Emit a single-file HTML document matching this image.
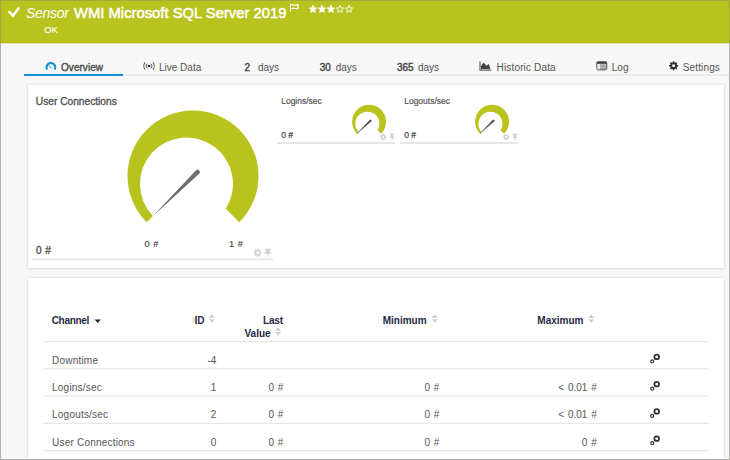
<!DOCTYPE html>
<html><head><meta charset="utf-8"><style>
html,body{margin:0;padding:0;}
body{width:730px;height:460px;overflow:hidden;position:relative;background:#f7f7f7;font-family:"Liberation Sans",sans-serif;}
.t{position:absolute;white-space:nowrap;}
.h{word-spacing:1px;}
.panel{position:absolute;background:#fff;box-shadow:0 0 2px rgba(0,0,0,0.14),0 1px 3px rgba(0,0,0,0.08);}
</style></head><body>
<div style="position:absolute;left:0;top:0;width:730px;height:43px;background:#b8c31d;"></div><div style="position:absolute;left:0;top:42px;width:730px;height:1px;background:#b2be12;"></div><div style="position:absolute;left:0;top:43px;width:730px;height:1px;background:#e2e6b4;"></div><div style="position:absolute;left:0;top:44px;width:730px;height:1px;background:#fdfdfd;"></div><svg style="position:absolute;left:0;top:0" width="40" height="40"><path d="M8.6,11.3 L13.1,15.6 L19.2,7.6" fill="none" stroke="#fff" stroke-width="2.4"/></svg><div class="t" style="left:26.00px;top:6.45px;font-size:14px;line-height:14px;color:#fff;font-weight:normal;font-style:italic;letter-spacing:-0.3px;">Sensor</div>
<div class="t" style="left:74.00px;top:5.77px;font-size:14.8px;line-height:14.8px;color:#fff;font-weight:normal;font-style:normal;-webkit-text-stroke:0.5px #fff;">WMI Microsoft SQL Server 2019</div>
<svg style="position:absolute;left:288px;top:3px" width="12" height="10"><path d="M2.5,1 V9 M2.5,1.8 C4.5,0.8 6,3 8,2 C9,1.6 9.5,1.6 10,1.6 L10,5.6 C8,6.4 6.5,4.4 4.5,5.4 L2.5,5.8" fill="none" stroke="#fff" stroke-width="1.1"/></svg><svg style="position:absolute;left:309.4px;top:4.5px" width="9" height="9"><path d="M4,0.3 L5,2.9 L7.7,3 L5.6,4.7 L6.3,7.4 L4,5.9 L1.7,7.4 L2.4,4.7 L0.3,3 L3,2.9 Z" fill="#fff" stroke="#fff" stroke-width="0.9" stroke-linejoin="round"/></svg><svg style="position:absolute;left:318.4px;top:4.5px" width="9" height="9"><path d="M4,0.3 L5,2.9 L7.7,3 L5.6,4.7 L6.3,7.4 L4,5.9 L1.7,7.4 L2.4,4.7 L0.3,3 L3,2.9 Z" fill="#fff" stroke="#fff" stroke-width="0.9" stroke-linejoin="round"/></svg><svg style="position:absolute;left:327.4px;top:4.5px" width="9" height="9"><path d="M4,0.3 L5,2.9 L7.7,3 L5.6,4.7 L6.3,7.4 L4,5.9 L1.7,7.4 L2.4,4.7 L0.3,3 L3,2.9 Z" fill="#fff" stroke="#fff" stroke-width="0.9" stroke-linejoin="round"/></svg><svg style="position:absolute;left:336.4px;top:4.5px" width="9" height="9"><path d="M4,0.3 L5,2.9 L7.7,3 L5.6,4.7 L6.3,7.4 L4,5.9 L1.7,7.4 L2.4,4.7 L0.3,3 L3,2.9 Z" fill="none" stroke="#fff" stroke-width="0.9" stroke-linejoin="round"/></svg><svg style="position:absolute;left:345.4px;top:4.5px" width="9" height="9"><path d="M4,0.3 L5,2.9 L7.7,3 L5.6,4.7 L6.3,7.4 L4,5.9 L1.7,7.4 L2.4,4.7 L0.3,3 L3,2.9 Z" fill="none" stroke="#fff" stroke-width="0.9" stroke-linejoin="round"/></svg><div class="t" style="left:44.30px;top:25.44px;font-size:9.4px;line-height:9.4px;color:#fff;font-weight:normal;font-style:normal;-webkit-text-stroke:0.15px #fff;">OK</div>
<div style="position:absolute;left:24px;top:74px;width:705px;height:2px;background:#ececec;"></div><div style="position:absolute;left:24px;top:73.5px;width:99px;height:2px;background:#0d90d5;"></div><svg style="position:absolute;left:40px;top:56px" width="20" height="20"><path d="M7.2,13.6 A4.3,4.3 0 1,1 14.6,13.6" fill="none" stroke="#0d90d5" stroke-width="2"/><path d="M8.8,9.6 L12.2,12.4" stroke="#0d90d5" stroke-width="1.1" stroke-dasharray="1.2,0.6"/></svg><div class="t" style="left:61.00px;top:63.03px;font-size:10px;line-height:10px;color:#4a4a4a;font-weight:normal;font-style:normal;-webkit-text-stroke:0.35px #4a4a4a;letter-spacing:0.05px;">Overview</div>
<svg style="position:absolute;left:140px;top:56px" width="20" height="20"><circle cx="9" cy="10" r="1.35" fill="#333"/><path d="M7.1,7.7 A3.2,3.2 0 0,0 7.1,12.3 M10.9,7.7 A3.2,3.2 0 0,1 10.9,12.3" fill="none" stroke="#555" stroke-width="1"/><path d="M5.2,6.4 A5.4,5.4 0 0,0 5.2,13.6 M12.8,6.4 A5.4,5.4 0 0,1 12.8,13.6" fill="none" stroke="#555" stroke-width="1.05"/></svg><div class="t" style="left:159.00px;top:63.03px;font-size:10px;line-height:10px;color:#555;font-weight:normal;font-style:normal;">Live Data</div>
<div class="t" style="left:244.60px;top:63.03px;font-size:10px;line-height:10px;color:#444;font-weight:normal;font-style:normal;-webkit-text-stroke:0.4px #444;">2</div>
<div class="t" style="left:257.90px;top:63.03px;font-size:10px;line-height:10px;color:#555;font-weight:normal;font-style:normal;">days</div>
<div class="t" style="left:319.80px;top:63.03px;font-size:10px;line-height:10px;color:#444;font-weight:normal;font-style:normal;-webkit-text-stroke:0.4px #444;">30</div>
<div class="t" style="left:335.70px;top:63.03px;font-size:10px;line-height:10px;color:#555;font-weight:normal;font-style:normal;">days</div>
<div class="t" style="left:396.90px;top:63.03px;font-size:10px;line-height:10px;color:#444;font-weight:normal;font-style:normal;-webkit-text-stroke:0.4px #444;">365</div>
<div class="t" style="left:417.90px;top:63.03px;font-size:10px;line-height:10px;color:#555;font-weight:normal;font-style:normal;">days</div>
<svg style="position:absolute;left:476px;top:58px" width="20" height="16"><path d="M4,3.3 V12.1 H15.3" fill="none" stroke="#666" stroke-width="1.2"/><path d="M5,11 L5,8 L7.6,4.6 L10.4,7.8 L13,6.1 L14.3,11 Z" fill="#444"/></svg><div class="t" style="left:496.60px;top:63.03px;font-size:10px;line-height:10px;color:#555;font-weight:normal;font-style:normal;letter-spacing:0.15px;">Historic Data</div>
<svg style="position:absolute;left:594px;top:59px" width="16" height="13"><rect x="2.8" y="3" width="10" height="7.9" rx="1.3" fill="#c4c4c4" stroke="#4a4a4a" stroke-width="0.9"/><rect x="2.6" y="2.6" width="10.4" height="2.1" rx="0.8" fill="#3c3c3c"/><rect x="3.6" y="5" width="2.3" height="5.2" fill="#eee"/><path d="M6.4,6.2 H12.2 M6.4,7.9 H12.2 M6.4,9.5 H12.2" stroke="#8a8a8a" stroke-width="0.7"/></svg><div class="t" style="left:611.80px;top:63.03px;font-size:10px;line-height:10px;color:#555;font-weight:normal;font-style:normal;">Log</div>
<svg style="position:absolute;left:664px;top:56px" width="20" height="20"><path d="M13.00,8.96 L14.13,9.02 L14.13,10.58 L13.00,10.64 L12.60,11.61 L13.36,12.45 L12.25,13.56 L11.41,12.80 L10.44,13.20 L10.38,14.33 L8.82,14.33 L8.76,13.20 L7.79,12.80 L6.95,13.56 L5.84,12.45 L6.60,11.61 L6.20,10.64 L5.07,10.58 L5.07,9.02 L6.20,8.96 L6.60,7.99 L5.84,7.15 L6.95,6.04 L7.79,6.80 L8.76,6.40 L8.82,5.27 L10.38,5.27 L10.44,6.40 L11.41,6.80 L12.25,6.04 L13.36,7.15 L12.60,7.99 Z M11.05,9.80 A1.45,1.45 0 1,0 8.15,9.80 A1.45,1.45 0 1,0 11.05,9.80 Z" fill="#333" fill-rule="evenodd"/></svg><div class="t" style="left:682.70px;top:63.03px;font-size:10px;line-height:10px;color:#555;font-weight:normal;font-style:normal;letter-spacing:0.15px;">Settings</div>
<div class="panel" style="left:28px;top:85px;width:696px;height:183px;"></div><div class="panel" style="left:28px;top:278px;width:696px;height:200px;"></div><div class="t" style="left:35.80px;top:97.47px;font-size:10.2px;line-height:10.2px;color:#555;font-weight:normal;font-style:normal;-webkit-text-stroke:0.35px #555;">User Connections</div>
<svg style="position:absolute;left:0;top:0" width="730" height="460"><path d="M146.70,222.30 A65.50,65.50 0 1,1 239.30,222.30 L225.80,208.80 A46.50,46.50 0 1,0 152.90,216.10 Z" fill="#b8c31d"/><path d="M152.70,216.30 L195.90,170.40 A2.30,2.30 0 0,1 199.20,173.70 Z" fill="#6e6e6e"/><path d="M357.08,133.72 A17.00,17.00 0 1,1 381.12,133.72 L377.61,130.21 A12.07,12.07 0 1,0 358.69,132.11 Z" fill="#b8c31d"/><path d="M357.0,133.6 L369.9,119.9 A0.95,0.95 0 0,1 371.2,121.2 Z" fill="#444" stroke="#444" stroke-width="0.3"/><path d="M480.08,133.72 A17.00,17.00 0 1,1 504.12,133.72 L500.61,130.21 A12.07,12.07 0 1,0 481.69,132.11 Z" fill="#b8c31d"/><path d="M480.0,133.6 L492.9,119.9 A0.95,0.95 0 0,1 494.2,121.2 Z" fill="#444" stroke="#444" stroke-width="0.3"/><circle cx="656.7" cy="356.90" r="2.3" fill="none" stroke="#333" stroke-width="1.75"/><circle cx="652.2" cy="361.40" r="1.5" fill="none" stroke="#3a3a3a" stroke-width="1.25"/><circle cx="656.7" cy="384.15" r="2.3" fill="none" stroke="#333" stroke-width="1.75"/><circle cx="652.2" cy="388.65" r="1.5" fill="none" stroke="#3a3a3a" stroke-width="1.25"/><circle cx="656.7" cy="411.40" r="2.3" fill="none" stroke="#333" stroke-width="1.75"/><circle cx="652.2" cy="415.90" r="1.5" fill="none" stroke="#3a3a3a" stroke-width="1.25"/><circle cx="656.7" cy="438.65" r="2.3" fill="none" stroke="#333" stroke-width="1.75"/><circle cx="652.2" cy="443.15" r="1.5" fill="none" stroke="#3a3a3a" stroke-width="1.25"/><path d="M260.51,251.88 L261.64,251.90 L261.64,253.30 L260.51,253.32 L260.17,254.15 L260.95,254.97 L259.97,255.95 L259.15,255.17 L258.32,255.51 L258.30,256.64 L256.90,256.64 L256.88,255.51 L256.05,255.17 L255.23,255.95 L254.25,254.97 L255.03,254.15 L254.69,253.32 L253.56,253.30 L253.56,251.90 L254.69,251.88 L255.03,251.05 L254.25,250.23 L255.23,249.25 L256.05,250.03 L256.88,249.69 L256.90,248.56 L258.30,248.56 L258.32,249.69 L259.15,250.03 L259.97,249.25 L260.95,250.23 L260.17,251.05 Z M258.90,252.60 A1.3,1.3 0 1,0 256.30,252.60 A1.3,1.3 0 1,0 258.90,252.60 Z" fill="#cfd3d6" fill-rule="evenodd"/><path d="M264.5,249.2 H271 M266.3,249.2 V252 L265,253.5 H270.5 L269.2,252 V249.2 M267.75,253.5 V256.5" fill="#cfd3d6" stroke="#cfd3d6" stroke-width="1.1"/><path d="M385.53,136.52 L386.35,136.56 L386.35,137.64 L385.53,137.68 L385.26,138.34 L385.81,138.95 L385.05,139.71 L384.44,139.16 L383.78,139.43 L383.74,140.25 L382.66,140.25 L382.62,139.43 L381.96,139.16 L381.35,139.71 L380.59,138.95 L381.14,138.34 L380.87,137.68 L380.05,137.64 L380.05,136.56 L380.87,136.52 L381.14,135.86 L380.59,135.25 L381.35,134.49 L381.96,135.04 L382.62,134.77 L382.66,133.95 L383.74,133.95 L383.78,134.77 L384.44,135.04 L385.05,134.49 L385.81,135.25 L385.26,135.86 Z M384.20,137.10 A1.0,1.0 0 1,0 382.20,137.10 A1.0,1.0 0 1,0 384.20,137.10 Z" fill="#cfd3d6" fill-rule="evenodd"/><path d="M389.5,134 H394.5 M391,134 V136.3 L390,137.6 H394 L393,136.3 V134 M392,137.6 V140.5" fill="#cfd3d6" stroke="#cfd3d6" stroke-width="1"/><path d="M508.53,136.52 L509.35,136.56 L509.35,137.64 L508.53,137.68 L508.26,138.34 L508.81,138.95 L508.05,139.71 L507.44,139.16 L506.78,139.43 L506.74,140.25 L505.66,140.25 L505.62,139.43 L504.96,139.16 L504.35,139.71 L503.59,138.95 L504.14,138.34 L503.87,137.68 L503.05,137.64 L503.05,136.56 L503.87,136.52 L504.14,135.86 L503.59,135.25 L504.35,134.49 L504.96,135.04 L505.62,134.77 L505.66,133.95 L506.74,133.95 L506.78,134.77 L507.44,135.04 L508.05,134.49 L508.81,135.25 L508.26,135.86 Z M507.20,137.10 A1.0,1.0 0 1,0 505.20,137.10 A1.0,1.0 0 1,0 507.20,137.10 Z" fill="#cfd3d6" fill-rule="evenodd"/><path d="M512.5,134 H517.5 M514,134 V136.3 L513,137.6 H517 L516,136.3 V134 M515,137.6 V140.5" fill="#cfd3d6" stroke="#cfd3d6" stroke-width="1"/><path d="M208.8,318.1 L211.8,314.3 L214.8,318.1 Z M208.8,319.2 L211.8,323.0 L214.8,319.2 Z" fill="#cbcfd2"/><path d="M275.0,330.8 L278.0,327.0 L281.0,330.8 Z M275.0,331.9 L278.0,335.7 L281.0,331.9 Z" fill="#cbcfd2"/><path d="M431.8,318.1 L434.8,314.3 L437.8,318.1 Z M431.8,319.2 L434.8,323.0 L437.8,319.2 Z" fill="#cbcfd2"/><path d="M588.3,318.1 L591.3,314.3 L594.3,318.1 Z M588.3,319.2 L591.3,323.0 L594.3,319.2 Z" fill="#cbcfd2"/><path d="M94.6,319.4 H100.8 L97.7,323 Z" fill="#1d2640"/></svg><div class="t h" style="left:36.00px;top:246.44px;font-size:10px;line-height:10px;color:#4a4a4a;font-weight:normal;font-style:normal;-webkit-text-stroke:0.3px #4a4a4a;">0 #</div>
<svg style="position:absolute;left:0;top:250px" width="300" height="20"><rect x="32" y="8.6" width="241" height="1.5" fill="#e3e3e3"/></svg><div class="t h" style="left:144.50px;top:239.63px;font-size:9.3px;line-height:9.3px;color:#4a4a4a;font-weight:normal;font-style:normal;-webkit-text-stroke:0.2px #4a4a4a;">0 #</div>
<div class="t h" style="left:228.90px;top:239.63px;font-size:9.3px;line-height:9.3px;color:#4a4a4a;font-weight:normal;font-style:normal;-webkit-text-stroke:0.2px #4a4a4a;">1 #</div>
<div class="t" style="left:281.20px;top:96.70px;font-size:8.5px;line-height:8.5px;color:#555;font-weight:normal;font-style:normal;-webkit-text-stroke:0.2px #555;">Logins/sec</div>
<div class="t h" style="left:281.20px;top:131.30px;font-size:8.5px;line-height:8.5px;color:#4a4a4a;font-weight:normal;font-style:normal;word-spacing:0;-webkit-text-stroke:0.25px #4a4a4a;">0 #</div>
<div style="position:absolute;left:277px;top:142px;width:118px;height:2px;background:#e6e6e6;"></div><div class="t" style="left:404.20px;top:96.70px;font-size:8.5px;line-height:8.5px;color:#555;font-weight:normal;font-style:normal;-webkit-text-stroke:0.2px #555;">Logouts/sec</div>
<div class="t h" style="left:404.20px;top:131.30px;font-size:8.5px;line-height:8.5px;color:#4a4a4a;font-weight:normal;font-style:normal;word-spacing:0;-webkit-text-stroke:0.25px #4a4a4a;">0 #</div>
<div style="position:absolute;left:400px;top:142px;width:118px;height:2px;background:#e6e6e6;"></div><div class="t" style="left:51.70px;top:315.84px;font-size:10px;line-height:10px;color:#1f2a44;font-weight:bold;font-style:normal;letter-spacing:-0.3px;">Channel</div>
<div class="t" style="left:194.40px;top:316.24px;font-size:10px;line-height:10px;color:#1f2a44;font-weight:bold;font-style:normal;">ID</div>
<div class="t" style="left:263.10px;top:316.24px;font-size:10px;line-height:10px;color:#1f2a44;font-weight:bold;font-style:normal;letter-spacing:-0.2px;">Last</div>
<div class="t" style="left:244.50px;top:328.64px;font-size:10px;line-height:10px;color:#1f2a44;font-weight:bold;font-style:normal;">Value</div>
<div class="t" style="left:382.70px;top:316.24px;font-size:10px;line-height:10px;color:#1f2a44;font-weight:bold;font-style:normal;">Minimum</div>
<div class="t" style="left:537.30px;top:316.24px;font-size:10px;line-height:10px;color:#1f2a44;font-weight:bold;font-style:normal;">Maximum</div>
<svg style="position:absolute;left:0;top:0" width="730" height="460"><rect x="43.5" y="341.00" width="665" height="1.2" fill="#e6e6e6"/><rect x="43.5" y="368.25" width="665" height="1.2" fill="#e6e6e6"/><rect x="43.5" y="395.50" width="665" height="1.2" fill="#e6e6e6"/><rect x="43.5" y="422.75" width="665" height="1.2" fill="#e6e6e6"/><rect x="43.5" y="450.00" width="665" height="1.2" fill="#e6e6e6"/></svg><div class="t" style="left:52.10px;top:355.94px;font-size:10px;line-height:10px;color:#555;font-weight:normal;font-style:normal;letter-spacing:0.2px;">Downtime</div>
<div class="t" style="right:513.70px;top:355.94px;font-size:10px;line-height:10px;color:#555;font-weight:normal;font-style:normal;">-4</div>
<div class="t" style="left:52.10px;top:383.19px;font-size:10px;line-height:10px;color:#555;font-weight:normal;font-style:normal;letter-spacing:0.2px;">Logins/sec</div>
<div class="t" style="right:513.70px;top:383.19px;font-size:10px;line-height:10px;color:#555;font-weight:normal;font-style:normal;">1</div>
<div class="t h" style="right:446.60px;top:383.19px;font-size:10px;line-height:10px;color:#555;font-weight:normal;font-style:normal;">0 #</div>
<div class="t h" style="right:290.60px;top:383.19px;font-size:10px;line-height:10px;color:#555;font-weight:normal;font-style:normal;">0 #</div>
<div class="t h" style="right:133.30px;top:383.19px;font-size:10px;line-height:10px;color:#555;font-weight:normal;font-style:normal;">&lt; 0.01 #</div>
<div class="t" style="left:52.10px;top:410.44px;font-size:10px;line-height:10px;color:#555;font-weight:normal;font-style:normal;letter-spacing:0.2px;">Logouts/sec</div>
<div class="t" style="right:513.70px;top:410.44px;font-size:10px;line-height:10px;color:#555;font-weight:normal;font-style:normal;">2</div>
<div class="t h" style="right:446.60px;top:410.44px;font-size:10px;line-height:10px;color:#555;font-weight:normal;font-style:normal;">0 #</div>
<div class="t h" style="right:290.60px;top:410.44px;font-size:10px;line-height:10px;color:#555;font-weight:normal;font-style:normal;">0 #</div>
<div class="t h" style="right:133.30px;top:410.44px;font-size:10px;line-height:10px;color:#555;font-weight:normal;font-style:normal;">&lt; 0.01 #</div>
<div class="t" style="left:52.10px;top:437.69px;font-size:10px;line-height:10px;color:#555;font-weight:normal;font-style:normal;letter-spacing:0.2px;">User Connections</div>
<div class="t" style="right:513.70px;top:437.69px;font-size:10px;line-height:10px;color:#555;font-weight:normal;font-style:normal;">0</div>
<div class="t h" style="right:446.60px;top:437.69px;font-size:10px;line-height:10px;color:#555;font-weight:normal;font-style:normal;">0 #</div>
<div class="t h" style="right:290.60px;top:437.69px;font-size:10px;line-height:10px;color:#555;font-weight:normal;font-style:normal;">0 #</div>
<div class="t h" style="right:133.30px;top:437.69px;font-size:10px;line-height:10px;color:#555;font-weight:normal;font-style:normal;">0 #</div>
<div style="position:absolute;left:0;top:0;width:730px;height:1px;background:#a7ab3b;"></div><div style="position:absolute;left:0;top:0;width:1px;height:43px;background:#a3a73f;"></div><div style="position:absolute;left:729px;top:0;width:1px;height:43px;background:#a3a73f;"></div><div style="position:absolute;left:0;top:43px;width:1px;height:417px;background:#b0b1aa;"></div><div style="position:absolute;left:729px;top:43px;width:1px;height:417px;background:#b0b1aa;"></div><div style="position:absolute;left:0;top:459px;width:730px;height:1px;background:#b0b1aa;"></div>
</body></html>
